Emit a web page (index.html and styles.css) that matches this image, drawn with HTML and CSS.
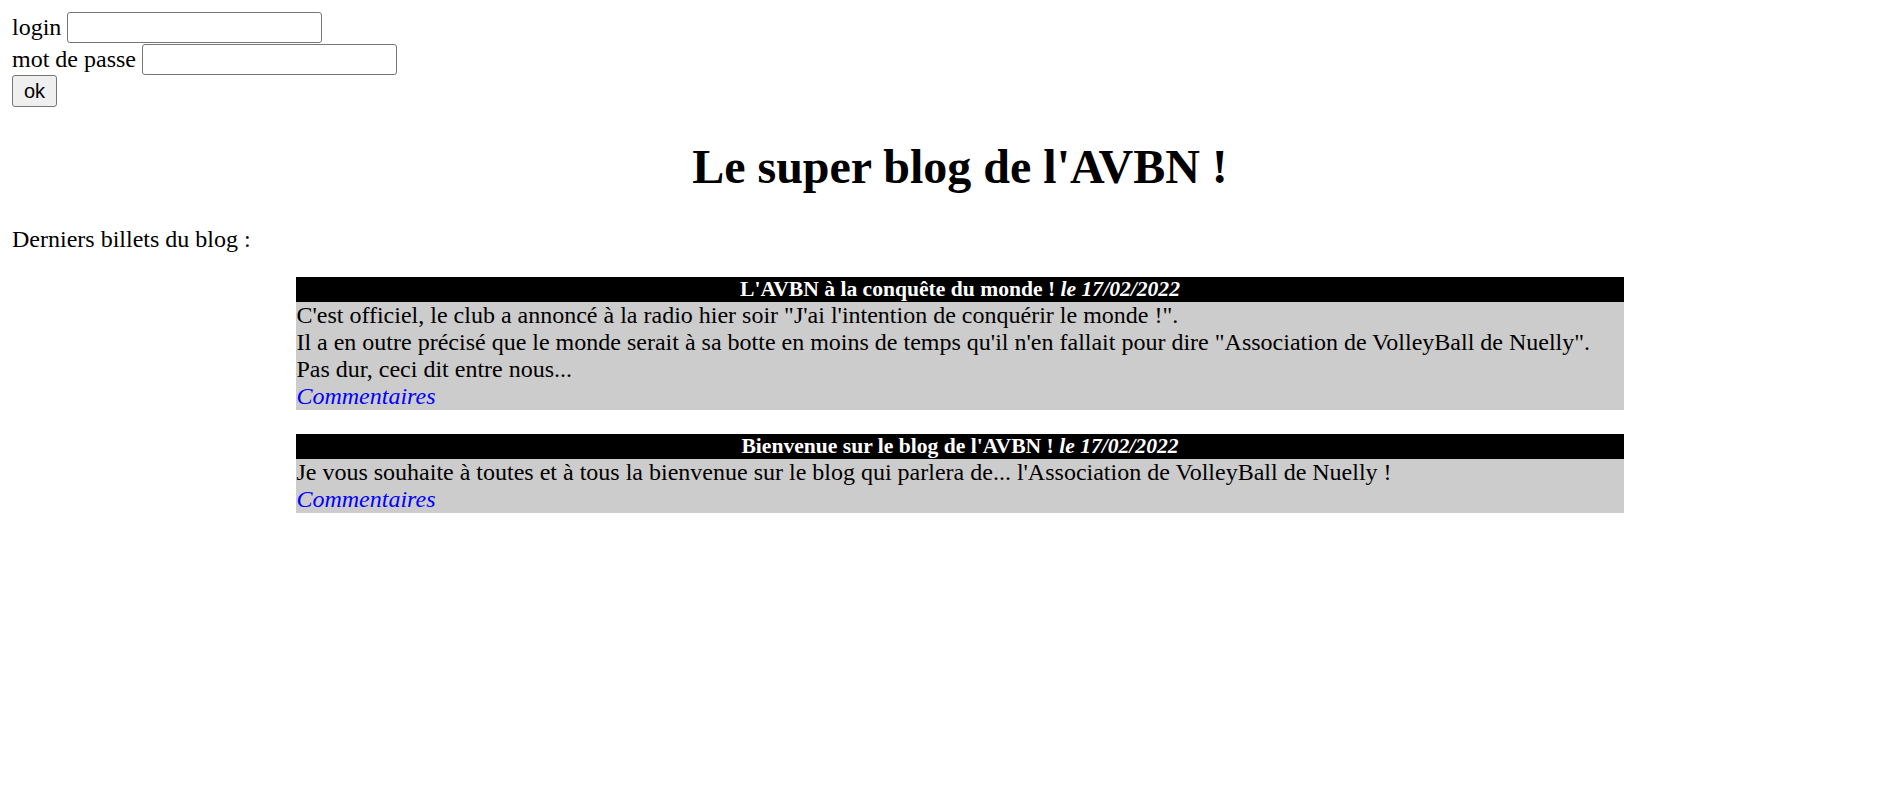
FILE: index.html
```html
<!DOCTYPE html>
<html lang="fr">
<head>
<meta charset="utf-8">
<title>Mon blog</title>
<link rel="stylesheet" href="styles.css">
</head>
<body>
<form class="login-form">
  <div class="row">login <input class="field" type="text" name="login"></div>
  <div class="row">mot de passe <input class="field" type="password" name="pass"></div>
  <div class="row"><input class="btn" type="submit" value="ok"></div>
</form>

<h1 class="title">Le super blog de l'AVBN !</h1>
<p class="intro">Derniers billets du blog :</p>

<div class="news">
  <h3 class="news-title">L'AVBN à la conquête du monde ! <em>le 17/02/2022</em></h3>
  <p class="news-body">C'est officiel, le club a annoncé à la radio hier soir "J'ai l'intention de conquérir le monde !".<br>
  Il a en outre précisé que le monde serait à sa botte en moins de temps qu'il n'en fallait pour dire "Association de VolleyBall de Nuelly".<br>
  Pas dur, ceci dit entre nous...<br>
  <em><a class="link" href="#">Commentaires</a></em></p>
</div>

<div class="news">
  <h3 class="news-title">Bienvenue sur le blog de l'AVBN ! <em>le 17/02/2022</em></h3>
  <p class="news-body">Je vous souhaite à toutes et à tous la bienvenue sur le blog qui parlera de... l'Association de VolleyBall de Nuelly !<br>
  <em><a class="link" href="#">Commentaires</a></em></p>
</div>
</body>
</html>
```
FILE: styles.css
```css
html {
  overflow: hidden;
  background: #ffffff;
}
body {
  margin: 11px 12px 0 12px;
  width: 1896px;
  font-family: "Liberation Serif", "Times New Roman", serif;
  font-size: 24px;
  line-height: 27px;
  color: #000000;
}
.login-form {
  margin: 0;
}
.row {
  display: flex;
  align-items: center;
  gap: 6px;
  height: 32px;
  white-space: nowrap;
}
.field {
  box-sizing: border-box;
  width: 255px;
  height: 31px;
  margin: 0;
  padding: 2px 3px;
  border: 1px solid #767676;
  border-radius: 3px;
  background: #ffffff;
  font-family: "Liberation Sans", Arial, sans-serif;
  font-size: 20px;
}
.btn {
  box-sizing: border-box;
  width: 45px;
  height: 32px;
  margin: 0;
  padding: 0;
  border: 1px solid #767676;
  border-radius: 3px;
  background: #efefef;
  color: #000000;
  font-family: "Liberation Sans", Arial, sans-serif;
  font-size: 20px;
}
.title {
  margin: 32px 0;
  text-align: center;
  font-size: 48px;
  line-height: 55px;
  font-weight: bold;
}
.intro {
  margin: 0 0 24px 0;
}
.news {
  width: 70%;
  margin: 0 auto;
}
.news-title {
  margin: 0;
  background: #000000;
  color: #ffffff;
  text-align: center;
  font-size: 21.6px;
  line-height: 25px;
  font-weight: bold;
}
.news-body {
  margin: 0 0 24px 0;
  background: #cccccc;
}
.link {
  color: #0000ff;
  text-decoration: none;
}
```
